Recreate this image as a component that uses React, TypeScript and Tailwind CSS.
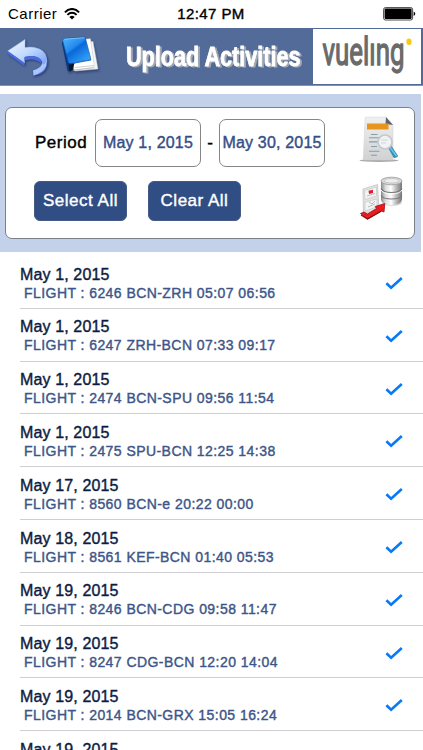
const flights: [string, string][] = [
  ["May 1, 2015", "6246 BCN-ZRH 05:07 06:56"],
  ["May 1, 2015", "6247 ZRH-BCN 07:33 09:17"],
  ["May 1, 2015", "2474 BCN-SPU 09:56 11:54"],
  ["May 1, 2015", "2475 SPU-BCN 12:25 14:38"],
  ["May 17, 2015", "8560 BCN-e 20:22 00:00"],
  ["May 18, 2015", "8561 KEF-BCN 01:40 05:53"],
  ["May 19, 2015", "8246 BCN-CDG 09:58 11:47"],
  ["May 19, 2015", "8247 CDG-BCN 12:20 14:04"],
  ["May 19, 2015", "2014 BCN-GRX 15:05 16:24"],
  ["May 19, 2015", "2015 GRX-BCN 16:59 18:15"],
];

const medium = "[-webkit-text-stroke:0.4px_currentColor]";

function WifiIcon() {
  return (
    <svg width="16" height="12" viewBox="0 0 16 12" fill="none" stroke="#000" strokeWidth="1.9">
      <path d="M0.9 4.3C5-0.2 11-0.2 15.1 4.3" />
      <path d="M3.4 6.9C6.1 4 9.9 4 12.6 6.9" />
      <path d="M5.4 8.9Q8 6.6 10.6 8.9L8 11.6Z" fill="#000" stroke="none" />
    </svg>
  );
}

function BatteryIcon() {
  return (
    <svg width="33" height="14" viewBox="0 0 33 14">
      <rect x="0.6" y="0.6" width="29" height="12.4" rx="1.8" fill="#fff" stroke="#333" strokeWidth="0.9" />
      <rect x="1.6" y="1.6" width="27" height="10.4" rx="1" fill="#000" />
      <path d="M30.7 4.7Q32.3 5.2 32.3 6.8T30.7 8.9Z" fill="#000" />
    </svg>
  );
}

function BackIcon() {
  return (
    <svg width="44" height="42" viewBox="0 0 44 42" className="drop-shadow-[1px_1px_1px_#27386b]">
      <defs>
        <linearGradient id="back" x1="0" y1="0" x2="1" y2="1">
          <stop offset="0" stopColor="#f3f9ff" />
          <stop offset="0.5" stopColor="#c1d9ff" />
          <stop offset="1" stopColor="#719cf6" />
        </linearGradient>
        <linearGradient id="tail" x1="0" y1="1" x2="1" y2="0">
          <stop offset="0" stopColor="#3c51c9" />
          <stop offset="0.5" stopColor="#8cabff" />
          <stop offset="1" stopColor="#dceaff" />
        </linearGradient>
      </defs>
      <path d="M27 33.5Q39 32 36 24L41 22Q42.5 36.5 27.5 38.5Z" fill="url(#tail)" stroke="#4261cc" strokeWidth="0.7" />
      <path d="M1.6 14L18.5 26V20Q30 17 35.5 23Q37 25 37 29L40.5 25Q41.5 15.5 33.5 12Q27 9 19 10.5V2.4Z" fill="url(#back)" stroke="#a5bff5" strokeWidth="0.5" />
      <path d="M1.6 14L18.5 26V29L2 17ZM18.5 20Q30 17 35 23V26Q29 20.5 18.5 23.5Z" fill="#4a6be0" />
      <path d="M27 33.5Q36 31 36 26L38 28Q39 35 27.5 38.5Z" fill="#a9c7ff" />
    </svg>
  );
}

function BookIcon() {
  return (
    <svg width="40" height="40" viewBox="0 0 40 40" className="drop-shadow-[1px_2px_1px_#334778]">
      <defs>
        <linearGradient id="book" x1="0" y1="0" x2="0.8" y2="1">
          <stop offset="0" stopColor="#54b8ff" />
          <stop offset="0.42" stopColor="#238bed" />
          <stop offset="0.5" stopColor="#0868d9" />
          <stop offset="1" stopColor="#39a7fc" />
        </linearGradient>
      </defs>
      <path d="M26 6L32 5.5L37 33L14 35L12 26Z" fill="#f4f5f5" stroke="#c2c5c9" strokeWidth="0.5" />
      <path d="M25 3L29.5 2.8L33.5 31L13 34.5L12 25Z" fill="#fff" stroke="#bfc3c8" strokeWidth="0.5" />
      <path d="M1.5 4.5L7.5 27L8.5 36L6.5 34.5L1 7Z" fill="#0b3981" />
      <path d="M7.5 27L13.5 27L11.5 34L8.5 35.5Z" fill="#071526" />
      <path d="M1.5 4Q2 2.7 3.5 2.5L22.5 1Q24 1 24.5 2.5L30 23.5L9 27.5L7.5 27Z" fill="url(#book)" stroke="#0756b4" strokeWidth="0.6" />
      <path d="M3.5 3.2L23.5 1.7" stroke="#93d2ff" strokeWidth="0.7" />
      <path d="M14 31.5L33 29.5M12 34L33 31.8" stroke="#adb1b6" strokeWidth="0.6" />
      <path d="M8.6 28L30 24" stroke="#075dcc" strokeWidth="0.8" />
    </svg>
  );
}

function VuelingLogo() {
  return (
    <svg width="108" height="55" viewBox="0 0 108 55">
      <g transform="translate(9.5 36) scale(1 1.48)">
        <text x="0" y="0" textLength="82" lengthAdjust="spacingAndGlyphs" fill="#6a6a6a" stroke="#6a6a6a" strokeWidth="0.9" strokeLinejoin="round" className="font-[Roboto,sans-serif] text-[26px]">vuelıng</text>
      </g>
      <ellipse cx="96" cy="12.7" rx="2.6" ry="3.2" fill="#fbc914" />
    </svg>
  );
}

function ReportIcon() {
  return (
    <svg width="44" height="50" viewBox="0 0 44 50">
      <defs>
        <linearGradient id="page" x1="0" y1="0" x2="0" y2="1">
          <stop offset="0" stopColor="#f0f0f0" />
          <stop offset="1" stopColor="#cfd1d2" />
        </linearGradient>
      </defs>
      <ellipse cx="20" cy="46.5" rx="19.5" ry="1.5" fill="#a8a9aa" />
      <path d="M6.2 3.2H27L34 11V46H4.2Z" fill="url(#page)" stroke="#d0d0d0" strokeWidth="0.5" />
      <path d="M27 3L34 11L26.5 10Z" fill="#60646a" />
      <path d="M8 9.5H29.5V15.5H8Z" fill="#e7951f" />
      <path d="M12 20.5H18.5M10 23.7H20M10 27.9H20M12 32.5H18M10 37.3H20.5M12 41.3H18" stroke="#889cab" strokeWidth="1.1" />
      <path d="M29.5 34.5L32.5 32L39.2 42Q37 44.5 34.8 44Z" fill="#348eb9" />
      <path d="M31 33.5L37.5 42" stroke="#71c5e3" strokeWidth="1.5" />
      <circle cx="26" cy="28" r="7" fill="#f3f4f5" fillOpacity="0.9" stroke="#c5c9cc" strokeWidth="1.7" />
      <path d="M22 26H29M22 29H27" stroke="#ccd1d6" strokeWidth="0.8" />
    </svg>
  );
}

function DatabaseIcon() {
  return (
    <svg width="46" height="46" viewBox="0 0 46 46">
      <defs>
        <linearGradient id="metal">
          <stop offset="0" stopColor="#888" />
          <stop offset="0.22" stopColor="#ddd" />
          <stop offset="0.48" stopColor="#fff" />
          <stop offset="0.72" stopColor="#bbb" />
          <stop offset="1" stopColor="#777" />
        </linearGradient>
      </defs>
      <ellipse cx="33" cy="27" rx="10" ry="3" fill="#ddd" />
      <path d="M22 5V24Q23 29 32.5 29T43 24V5Z" fill="url(#metal)" />
      <ellipse cx="32.5" cy="5" rx="10.5" ry="3.8" fill="#d9d9de" stroke="#999" strokeWidth="0.8" />
      <ellipse cx="32.5" cy="4.8" rx="7.5" ry="2.2" fill="#eee" stroke="#aaa" strokeWidth="0.5" />
      <path d="M22 12.5Q24 16.5 32.5 16.5T43 12.5M22 19.5Q24 23 32.5 23T43 19.5" fill="none" stroke="#77777a" strokeWidth="1.1" />
      <path d="M22 14Q24 17.8 32.5 17.8T43 14" fill="none" stroke="#fff" strokeWidth="0.9" />
      <path d="M4 13L18.5 8.5L20 33L4.5 38Z" fill="#e3e3e3" stroke="#bdbdbd" strokeWidth="0.7" />
      <path d="M5.5 14.5L17.5 11V20L6 23.5ZM6 26L18 23V31L6 35Z" fill="#f4f4f4" stroke="#c7c7c7" strokeWidth="0.7" />
      <path d="M9.5 14.8L14 13.7V17L10 18Z" fill="#d91f30" />
      <path d="M8 20L16 17.5M10 26L13 28L16 25M9 31L16 28" fill="none" stroke="#aaa" strokeWidth="0.8" />
      <path d="M1.5 37.5L5 36L8.5 38L17.5 32.5L16.2 30.5L25.8 27.5L25 36L22.5 35L8.5 43Z" fill="#e91d20" stroke="#a50d12" strokeWidth="0.8" />
      <path d="M2 39L8.5 43L22.5 35" fill="none" stroke="#870d10" strokeWidth="1.1" />
    </svg>
  );
}

export default function App() {
  return (
    <div className="flex h-[750px] w-[423px] flex-col overflow-hidden bg-white font-['Liberation_Sans',Arial,sans-serif] text-black">
      <div className="grid h-7 shrink-0 grid-cols-[1fr_auto_1fr] items-center pr-[7px] pl-2">
        <div className="flex items-center gap-[7px] text-[15px] leading-7 tracking-[0.5px]">
          <span>Carrier</span>
          <WifiIcon />
        </div>
        <div className={`-ml-[2px] text-[15px] leading-7 tracking-[0.4px] ${medium}`}>12:47 PM</div>
        <div className="flex justify-end"><BatteryIcon /></div>
      </div>

      <header className="flex h-[58px] shrink-0 border-b border-[#8092b8] bg-[#536b99]">
        <div className="flex w-[125px] shrink-0 pt-[9px] pl-[6px]">
          <BackIcon />
          <div className="-mt-px ml-[11px]"><BookIcon /></div>
        </div>
        <h1 className="w-[188px] shrink-0 pt-[11px]">
          <svg width="180" height="38" viewBox="0 0 180 38" className="drop-shadow-[2px_1.5px_0px_#a4a8b0]">
            <text x="1" y="27.3" textLength="174.5" lengthAdjust="spacingAndGlyphs" fill="#fff" stroke="#fff" strokeWidth="0.8" className="text-[27px] font-bold">Upload Activities</text>
          </svg>
        </h1>
        <div className="mt-px h-[55px] w-[108px] bg-white"><VuelingLogo /></div>
      </header>

      <section className="mt-2 mr-[2px] h-[158px] shrink-0 bg-[#c3d1ea] pt-[13px] pr-[6px] pl-[5px]">
        <div className="flex h-[132px] rounded-[7px] border border-[#7c8088] bg-white">
          <div className="w-[347px] shrink-0 pt-[11px] pl-[28px]">
            <div className="flex h-12 items-center">
              <span className={`w-[61px] pl-px text-[17px] tracking-[0.5px] ${medium}`}>Period</span>
              <button className={`h-12 w-[106px] rounded-[7px] border border-[#858585] pb-px text-[16px] tracking-[0.18px] whitespace-nowrap text-[#354e87] ${medium}`}>May 1, 2015</button>
              <span className={`w-[18px] text-center text-[17px] ${medium}`}>-</span>
              <button className={`h-12 w-[106px] rounded-[7px] border border-[#858585] pb-px text-[16px] tracking-[0.18px] whitespace-nowrap text-[#354e87] ${medium}`}>May 30, 2015</button>
            </div>
            <div className="mt-[14px] flex gap-[21px]">
              {["Select All", "Clear All"].map((label) => (
                <button key={label} className={`h-10 w-[93px] rounded-[6px] border border-[#455a86] bg-[#304d84] px-0 text-[17px] tracking-[0.5px] whitespace-nowrap text-white ${medium}`}>{label}</button>
              ))}
            </div>
          </div>
          <div className="flex flex-col pt-[6px] pl-[6px]">
            <ReportIcon />
            <div className="mt-[12px]"><DatabaseIcon /></div>
          </div>
        </div>
      </section>

      <main className="mt-[4px]">
        {flights.map(([date, detail]) => (
          <div key={detail} className="ml-5 flex h-[52.8px] border-b border-[#cfcfd3]">
            <div className="w-[365px] shrink-0 pt-[8.7px] whitespace-nowrap">
              <div className={`h-[19px] text-[16px] leading-5 tracking-[0.13px] text-[#0d1c42] ${medium}`}>{date}</div>
              <div className={`h-[18px] pl-[4px] text-[14px] leading-[18px] tracking-[0.44px] text-[#3d5588] ${medium}`}>FLIGHT : {detail}</div>
            </div>
            <svg width="19" height="16" viewBox="0 0 19 16" className="mt-[19px]" fill="none" stroke="#087af7" strokeWidth="2.6">
              <path d="M1.4 8.3L6.1 12.8L16.8 3" />
            </svg>
          </div>
        ))}
      </main>
    </div>
  );
}
